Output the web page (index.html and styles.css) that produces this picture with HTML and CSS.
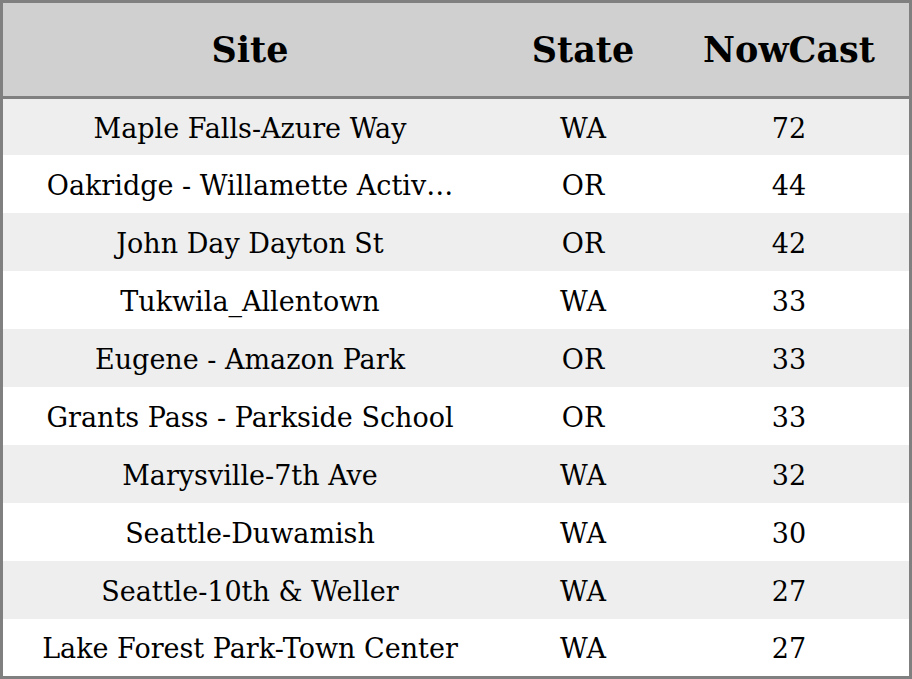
FILE: index.html
```html
<!DOCTYPE html>
<html>
<head>
<meta charset="utf-8">
<link rel="stylesheet" href="styles.css">
</head>
<body>
<table class="aq">
  <colgroup><col class="c-site"><col class="c-state"><col class="c-now"></colgroup>
  <thead>
    <tr class="head"><th>Site</th><th>State</th><th>NowCast</th></tr>
  </thead>
  <tbody>
    <tr class="odd first"><td>Maple Falls-Azure Way</td><td>WA</td><td>72</td></tr>
    <tr><td>Oakridge - Willamette Activ…</td><td>OR</td><td>44</td></tr>
    <tr class="odd"><td>John Day Dayton St</td><td>OR</td><td>42</td></tr>
    <tr><td>Tukwila_Allentown</td><td>WA</td><td>33</td></tr>
    <tr class="odd"><td>Eugene - Amazon Park</td><td>OR</td><td>33</td></tr>
    <tr><td>Grants Pass - Parkside School</td><td>OR</td><td>33</td></tr>
    <tr class="odd"><td>Marysville-7th Ave</td><td>WA</td><td>32</td></tr>
    <tr><td>Seattle-Duwamish</td><td>WA</td><td>30</td></tr>
    <tr class="odd"><td>Seattle-10th &amp; Weller</td><td>WA</td><td>27</td></tr>
    <tr class="last"><td>Lake Forest Park-Town Center</td><td>WA</td><td>27</td></tr>
  </tbody>
</table>
</body>
</html>
```
FILE: styles.css
```css
html, body {
  margin: 0;
  padding: 0;
  background: #ffffff;
}
.aq {
  border-collapse: separate;
  border-spacing: 0;
  table-layout: fixed;
  width: 912px;
  border: 3px solid #808080;
  font-family: "DejaVu Serif", serif;
  color: #000;
}
.c-site { width: 494px; }
.c-state { width: 172px; }
.c-now { width: 240px; }
.aq th, .aq td {
  padding: 0;
  text-align: center;
  white-space: nowrap;
  overflow: hidden;
}
.head th {
  background: #d0d0d0;
  height: 93px;
  font-size: 35px;
  font-weight: bold;
  border-bottom: 3px solid #808080;
}
.aq td {
  height: 56px;
  padding-top: 2px;
  font-size: 27px;
}
.odd td { background: #eeeeee; }
.first td { height: 54px; }
.last td { height: 55px; }
```
